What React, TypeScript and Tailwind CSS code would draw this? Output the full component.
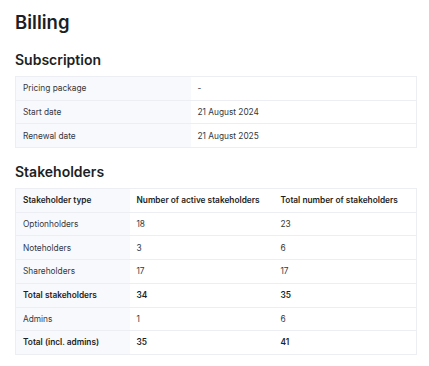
const subscription = [
  ['Pricing package', '-'],
  ['Start date', '21 August 2024'],
  ['Renewal date', '21 August 2025'],
]

const stakeholders = [
  { type: 'Optionholders', active: '18', total: '23' },
  { type: 'Noteholders', active: '3', total: '6' },
  { type: 'Shareholders', active: '17', total: '17' },
  { type: 'Total stakeholders', active: '34', total: '35', bold: true },
  { type: 'Admins', active: '1', total: '6' },
  { type: 'Total (incl. admins)', active: '35', total: '41', bold: true },
]

export default function App() {
  return (
    <div
      className="w-[429px] h-[366px] bg-white px-[15px] pt-[9px] text-[#1d1f24]"
      style={{ fontFamily: 'Inter, "Noto Sans", sans-serif' }}
    >
      <h1 className="text-[18.5px] font-semibold leading-[26px]">Billing</h1>

      <h2 className="mt-[15px] text-[14px] font-semibold leading-[20px]">Subscription</h2>
      <table className="mt-[6px] w-[402px] border-collapse border border-[#eceef3] text-[8.3px] text-[#34373e]">
        <tbody>
          {subscription.map(([label, value]) => (
            <tr key={label} className="h-[23.7px] border-b border-[#eceef3]">
              <td className="w-[175px] bg-[#f8f9fc] px-[7px]">{label}</td>
              <td className="px-[7px]">{value}</td>
            </tr>
          ))}
        </tbody>
      </table>

      <h2 className="mt-[14px] text-[14px] font-semibold leading-[20px]">Stakeholders</h2>
      <table className="mt-[6px] w-[402px] border-collapse border border-[#eceef3] text-[8.3px] text-[#34373e]">
        <thead>
          <tr className="h-[23.7px] border-b border-[#eceef3] text-left text-[#1d1f24]">
            <th className="w-[114px] bg-[#f8f9fc] px-[7px] font-semibold">Stakeholder type</th>
            <th className="w-[144px] px-[7px] font-semibold">Number of active stakeholders</th>
            <th className="px-[7px] font-semibold">Total number of stakeholders</th>
          </tr>
        </thead>
        <tbody>
          {stakeholders.map((row) => (
            <tr
              key={row.type}
              className={`h-[23.7px] border-b border-[#eceef3] ${row.bold ? 'font-semibold text-[#1d1f24]' : ''}`}
            >
              <td className="bg-[#f8f9fc] px-[7px]">{row.type}</td>
              <td className="px-[7px]">{row.active}</td>
              <td className="px-[7px]">{row.total}</td>
            </tr>
          ))}
        </tbody>
      </table>
    </div>
  )
}
